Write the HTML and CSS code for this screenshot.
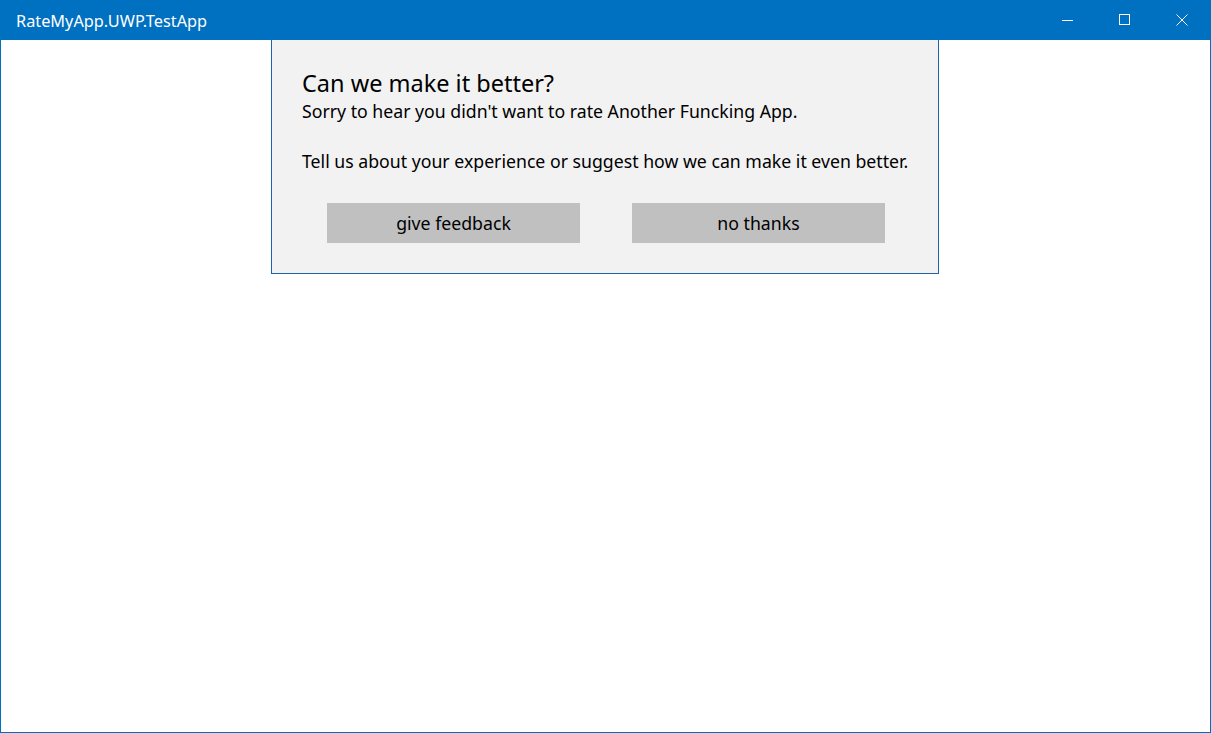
FILE: index.html
```html
<!DOCTYPE html>
<html>
<head>
<meta charset="utf-8">
<link rel="stylesheet" href="styles.css">
</head>
<body>
<div class="window">
  <div class="titlebar">
    <div class="title">RateMyApp.UWP.TestApp</div>
    <div class="controls">
      <div class="ctl"><svg width="12" height="12" viewBox="0 0 12 12"><path d="M0 6.5H11" stroke="#fff" stroke-width="1" fill="none"/></svg></div>
      <div class="ctl"><svg width="12" height="12" viewBox="0 0 12 12"><rect x="0.5" y="0.5" width="10" height="10" stroke="#fff" stroke-width="1" fill="none"/></svg></div>
      <div class="ctl"><svg width="12" height="12" viewBox="0 0 12 12"><path d="M0.5 0.5L11.5 11.5M11.5 0.5L0.5 11.5" stroke="#fff" stroke-width="1" fill="none"/></svg></div>
    </div>
  </div>
  <div class="content">
    <div class="dialog">
      <div class="heading">Can we make it better?</div>
      <div class="text">Sorry to hear you didn't want to rate Another Funcking App.</div>
      <div class="text para">Tell us about your experience or suggest how we can make it even better.</div>
      <div class="buttons">
        <div class="btn">give feedback</div>
        <div class="btn">no thanks</div>
      </div>
    </div>
  </div>
</div>
</body>
</html>
```
FILE: styles.css
```css
html, body {
  margin: 0;
  padding: 0;
  background: #fff;
}
body {
  font-family: "Noto Sans", "Open Sans", sans-serif;
}
.window {
  width: 1211px;
  height: 733px;
  box-sizing: border-box;
  border: 1px solid #0070c0;
  display: flex;
  flex-direction: column;
}
.titlebar {
  height: 39px;
  background: #0070c0;
  display: flex;
  align-items: center;
  justify-content: space-between;
  color: #fff;
}
.title {
  padding-left: 15px;
  font-size: 16.3px;
  margin-top: 1px;
}
.controls {
  display: flex;
  height: 100%;
}
.ctl {
  width: 57px;
  display: flex;
  align-items: center;
  justify-content: center;
  margin-top: -1px;
}
.content {
  flex: 1;
  padding-left: 270px;
}
.dialog {
  width: 668px;
  background: #f2f2f2;
  border: 1px solid #1f64aa;
  border-top: none;
  padding: 28px 0 30px 30px;
  box-sizing: border-box;
  height: 234px;
  color: #000;
}
.heading {
  font-size: 23.5px;
  line-height: 31px;
}
.text {
  font-size: 17.7px;
  line-height: 25px;
}
.para {
  margin-top: 25px;
}
.buttons {
  display: flex;
  gap: 52px;
  padding-left: 25px;
  margin-top: 29px;
}
.btn {
  width: 253px;
  height: 40px;
  background: #c0c0c0;
  display: flex;
  align-items: center;
  justify-content: center;
  font-size: 17.7px;
}
```
